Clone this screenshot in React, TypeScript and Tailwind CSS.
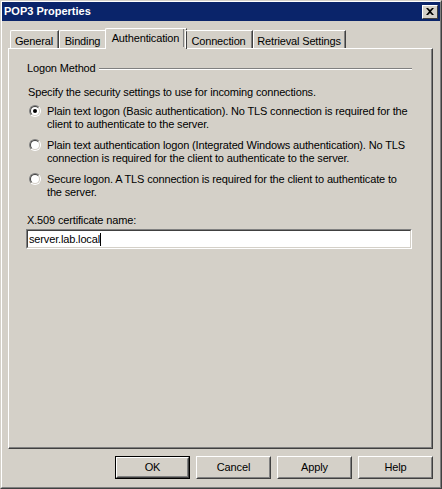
import React from 'react';

const tabs = [
  { label: 'General', w: 'w-[49px]' },
  { label: 'Binding', w: 'w-[48px]' },
  { label: 'Authentication', w: 'w-[76px]', active: true },
  { label: 'Connection', w: 'w-[68px]' },
  { label: 'Retrieval Settings', w: 'w-[93px]' },
];

const options = [
  {
    lines: [
      'Plain text logon (Basic authentication). No TLS connection is required for the',
      'client to authenticate to the server.',
    ],
    checked: true,
  },
  {
    lines: [
      'Plain text authentication logon (Integrated Windows authentication). No TLS',
      'connection is required for the client to authenticate to the server.',
    ],
  },
  {
    lines: [
      'Secure logon. A TLS connection is required for the client to authenticate to',
      'the server.',
    ],
  },
];

function Radio({ checked }: { checked?: boolean }) {
  return (
    <div className="w-[12px] h-[12px] shrink-0 rounded-full border border-t-[#808080] border-l-[#808080] border-b-white border-r-white">
      <div className="w-full h-full rounded-full border border-t-[#404040] border-l-[#404040] border-b-[#d4d0c8] border-r-[#d4d0c8] bg-white flex items-center justify-center">
        {checked && <div className="w-[4px] h-[4px] rounded-full bg-black" />}
      </div>
    </div>
  );
}

function Button({ label, isDefault }: { label: string; isDefault?: boolean }) {
  return (
    <div className={`w-[75px] h-[23px] ${isDefault ? 'border border-black' : ''}`}>
      <div className="w-full h-full border border-t-white border-l-white border-b-[#404040] border-r-[#404040]">
        <div className="w-full h-full border border-t-[#d4d0c8] border-l-[#d4d0c8] border-b-[#808080] border-r-[#808080] flex items-center justify-center">
          {label}
        </div>
      </div>
    </div>
  );
}

export default function App() {
  return (
    <div className="w-[442px] h-[489px] bg-[#d4d0c8] border border-t-[#d4d0c8] border-l-[#d4d0c8] border-b-[#404040] border-r-[#404040] font-['Liberation_Sans',Arial,sans-serif] text-[11px] leading-[13px] tracking-[-0.15px] text-black overflow-hidden">
      <div className="w-full h-full border border-t-white border-l-white border-b-[#808080] border-r-[#808080] flex flex-col">
        {/* Title bar */}
        <div className="h-[19px] bg-[#0a246a] flex items-center justify-between pl-[2px] pr-[2px]">
          <span className="text-white font-bold text-[11px] tracking-normal">POP3 Properties</span>
          <div className="w-[16px] h-[14px] bg-[#d4d0c8] border border-t-white border-l-white border-b-[#404040] border-r-[#404040] flex items-center justify-center">
            <svg width="8" height="7" viewBox="0 0 8 7">
              <path d="M0 0h2l2 2 2-2h2L5 3.5 8 7H6L4 5 2 7H0l3-3.5z" fill="#000" />
            </svg>
          </div>
        </div>

        {/* Tabs */}
        <div className="mt-[7px] ml-[6px] h-[20px] flex items-end relative z-10">
          <div className="w-[2px]" />
          {tabs.map((t) => (
            <div
              key={t.label}
              className={`${t.w} ${
                t.active ? 'h-[18px] -mx-[2px] px-[2px] pb-[2px] box-content -mb-px bg-[#d4d0c8]' : 'h-[18px]'
              } border-t border-l border-t-white border-l-white border-r border-r-[#404040] rounded-tl-[2px]`}
            >
              <div
                className={`w-full h-full border-r border-r-[#808080] flex justify-center ${
                  t.active ? 'pt-[3px]' : 'pt-[4px]'
                }`}
              >
                {t.label}
              </div>
            </div>
          ))}
        </div>

        {/* Panel */}
        <div className="ml-[6px] w-[425px] h-[401px] border border-t-white border-l-white border-b-[#404040] border-r-[#404040]">
          <div className="w-full h-full border-r border-b border-r-[#808080] border-b-[#808080] pt-[13px] pl-[18px] pr-[19px]">
            <div className="flex items-center">
              <span>Logon Method</span>
              <div className="flex-1 ml-[3px] border-t border-t-[#808080] border-b border-b-white" />
            </div>

            <div className="mt-[11px] pl-px">Specify the security settings to use for incoming connections.</div>

            <div className="mt-[6px] flex flex-col gap-[8px]">
              {options.map((o, i) => (
                <div key={i} className="flex pl-[2px]">
                  <Radio checked={o.checked} />
                  <div className="ml-[6px] whitespace-nowrap">
                    {o.lines.map((l) => (
                      <div key={l}>{l}</div>
                    ))}
                  </div>
                </div>
              ))}
            </div>

            <div className="mt-[15px]">X.509 certificate name:</div>
            <div className="mt-[2px] -ml-px w-[386px] h-[20px] border border-t-[#808080] border-l-[#808080] border-b-white border-r-white">
              <div className="w-full h-full border border-t-[#404040] border-l-[#404040] border-b-[#d4d0c8] border-r-[#d4d0c8] bg-white flex items-center pl-[1px]">
                <span>server.lab.local</span>
                <span className="w-px h-[13px] bg-black" />
              </div>
            </div>
          </div>
        </div>

        {/* Buttons */}
        <div className="mt-[7px] flex justify-end gap-[6px] pr-[7px]">
          <Button label="OK" isDefault />
          <Button label="Cancel" />
          <Button label="Apply" />
          <Button label="Help" />
        </div>
      </div>
    </div>
  );
}
